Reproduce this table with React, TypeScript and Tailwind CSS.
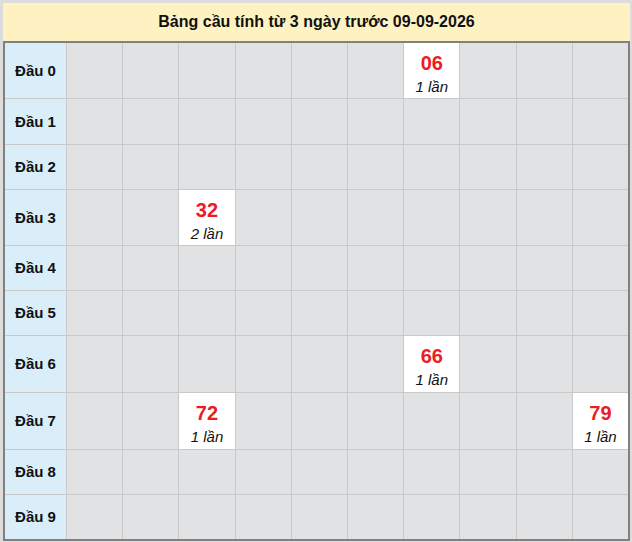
import React from 'react'

const FONT = { fontFamily: '"Liberation Sans", Arial, sans-serif' }

// hit cells: row -> { col: [number, count] }
const HITS: Record<number, Record<number, [string, number]>> = {
    0: { 6: ['06', 1] },
    3: { 2: ['32', 2] },
    6: { 6: ['66', 1] },
    7: { 2: ['72', 1], 9: ['79', 1] },
}

const ROW_HEIGHTS = ['h-[55px]', 'h-[45px]', 'h-[44px]', 'h-[55px]', 'h-[44px]', 'h-[44px]', 'h-[56px]', 'h-[56px]', 'h-[44px]', 'h-[44px]']

export default function App() {
    return (
        <div className="w-[632px] h-[542px] bg-[#dcdcdc] pt-[3px] pl-[3px] pr-[2px] pb-[1px] flex flex-col" style={FONT}>
            {/* Title */}
            <div className="h-[38px] bg-[#fff2c2] flex items-center justify-center text-[16px] font-bold text-[#111]">
                Bảng cầu tính từ 3 ngày trước 09-09-2026
            </div>

            {/* Grid */}
            <div className="border-2 border-[#808080] bg-[#c9c9c9] grid grid-cols-[61px_repeat(10,1fr)] gap-px">
                {ROW_HEIGHTS.map((h, r) => (
                    <React.Fragment key={r}>
                        <div className={`${h} bg-[#d9eef8] flex items-center justify-center pt-px text-[15px] font-bold text-[#111]`}>
                            Đầu {r}
                        </div>
                        {Array.from({ length: 10 }).map((_, c) => {
                            const hit = HITS[r]?.[c]
                            return hit ? (
                                <div key={c} className={`${h} bg-white flex flex-col items-center justify-center pt-[4px]`}>
                                    <span className="text-[20px] leading-[28px] font-bold text-[#ec1c24]">{hit[0]}</span>
                                    <span className="text-[15px] leading-[20px] italic text-[#111]">{hit[1]} lần</span>
                                </div>
                            ) : (
                                <div key={c} className={`${h} bg-[#e1e2e4]`} />
                            )
                        })}
                    </React.Fragment>
                ))}
            </div>
        </div>
    )
}
